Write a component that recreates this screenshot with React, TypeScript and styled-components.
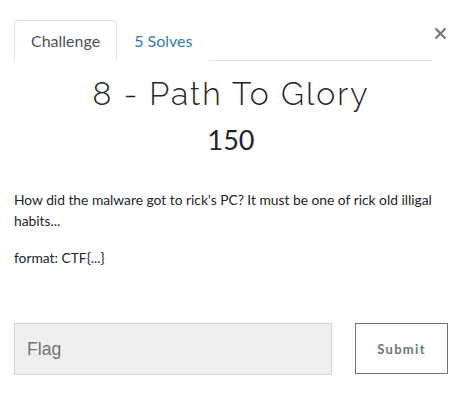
import React from "react";
import styled, { createGlobalStyle } from "styled-components";

const Global = createGlobalStyle`
  html, body { margin: 0; padding: 0; background: #fff; }
  body { font-family: Lato, "Open Sans", sans-serif; color: #212529; }
  * { box-sizing: border-box; }
`;

const Modal = styled.div`
  width: 467px;
  height: 401px;
  padding: 20px 19px 0 14px;
  display: flex;
  flex-direction: column;
`;

const Header = styled.div`
  display: flex;
  align-items: flex-start;
`;

const Tabs = styled.ul`
  list-style: none;
  margin: 0;
  padding: 0;
  display: flex;
  width: 419px;
  border-bottom: 1px solid #dee2e6;
`;

const Tab = styled.li<{ $active?: boolean }>`
  margin-bottom: -1px;
  height: 41px;
  padding: 0 16px;
  display: flex;
  align-items: center;
  font-family: Lato, sans-serif;
  font-size: 16px;
  color: ${(p) => (p.$active ? "#495057" : "#337ab7")};
  background: #fff;
  border: 1px solid ${(p) => (p.$active ? "#dee2e6" : "transparent")};
  border-bottom-color: ${(p) => (p.$active ? "#fff" : "transparent")};
  border-radius: 4px 4px 0 0;
`;

const Close = styled.button`
  margin-left: auto;
  margin-top: 5px;
  border: none;
  background: none;
  padding: 0;
  width: 16px;
  height: 16px;
  display: flex;
  align-items: center;
  justify-content: center;
  color: #777;
`;

const Title = styled.h3`
  margin: 14px 0 0;
  text-align: center;
  font-family: Raleway, Lato, sans-serif;
  font-weight: 300;
  font-size: 32px;
  line-height: 38px;
  letter-spacing: 2px;
  color: #212529;
`;

const Value = styled.h4`
  margin: 11px 0 0;
  text-align: center;
  font-family: Lato, sans-serif;
  font-weight: 400;
  font-size: 27px;
  line-height: 32px;
  color: #212529;
`;

const Description = styled.div`
  margin-top: 33px;
  font-family: Lato, sans-serif;
  font-size: 13.8px;
  line-height: 21px;
  color: #212529;
  p { margin: 0 0 16px; }
`;

const Form = styled.form`
  margin-top: 39px;
  display: flex;
  align-items: flex-start;
  gap: 23px;
`;

const FlagInput = styled.input`
  width: 318px;
  height: 52px;
  padding: 0 12px;
  background: #efefef;
  border: 1px solid #ced4da;
  border-radius: 0;
  font-family: "Liberation Sans", Arial, sans-serif;
  font-size: 17.6px;
  color: #495057;
  &::placeholder { color: #6c757d; }
`;

const SubmitButton = styled.button`
  width: 93px;
  height: 51px;
  background: #fff;
  border: 1px solid #6c757d;
  border-radius: 0;
  font-family: Lato, sans-serif;
  font-weight: 700;
  font-size: 13px;
  letter-spacing: 1.3px;
  color: #6c757d;
`;

export default function App() {
  return (
    <>
      <Global />
      <Modal>
        <Header>
          <Tabs>
            <Tab $active>Challenge</Tab>
            <Tab>5 Solves</Tab>
          </Tabs>
          <Close aria-label="Close">
            <svg width="13" height="13" viewBox="0 0 13 13">
              <path d="M1.5 1.5 L11.5 11.5 M11.5 1.5 L1.5 11.5" stroke="#777" strokeWidth="2.2" />
            </svg>
          </Close>
        </Header>
        <Title>8 - Path To Glory</Title>
        <Value>150</Value>
        <Description>
          <p>How did the malware got to rick's PC? It must be one of rick old illigal habits...</p>
          <p>format: CTF{"{...}"}</p>
        </Description>
        <Form onSubmit={(e) => e.preventDefault()}>
          <FlagInput placeholder="Flag" />
          <SubmitButton type="submit">Submit</SubmitButton>
        </Form>
      </Modal>
    </>
  );
}
